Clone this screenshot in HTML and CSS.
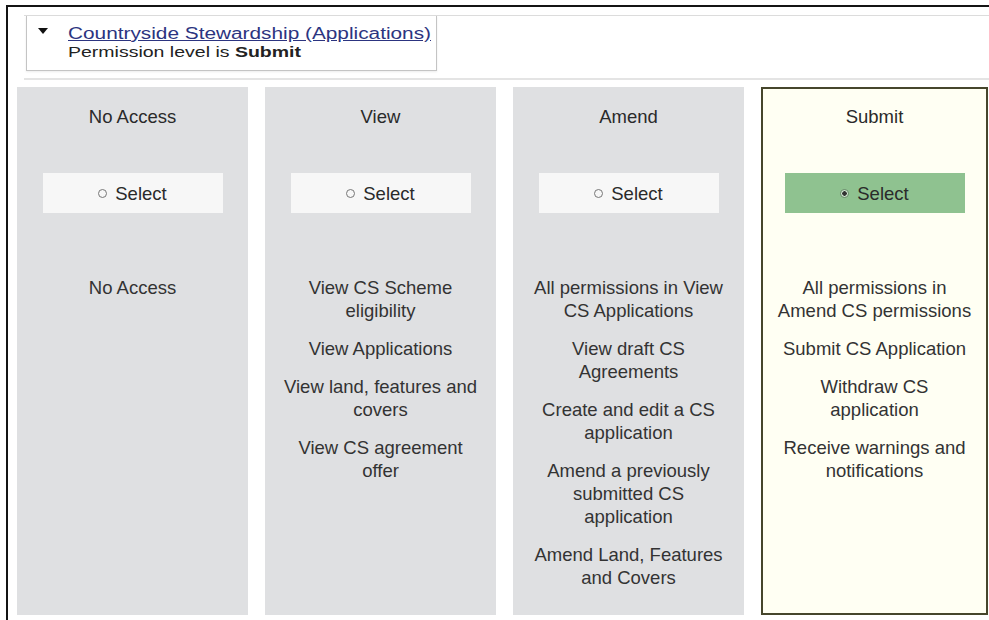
FILE: index.html
```html
<!DOCTYPE html>
<html lang="en">
<head>
<meta charset="utf-8">
<title>Countryside Stewardship (Applications)</title>
<link rel="stylesheet" href="styles.css">
</head>
<body>
<div class="frame">
  <div class="panel">
    <div class="summary">
      <span class="caret" aria-hidden="true"></span>
      <div class="summary-text">
        <a class="title" href="#">Countryside Stewardship (Applications)</a>
        <div class="level-note">Permission level is <b>Submit</b></div>
      </div>
    </div>
  </div>
  <div class="levels">
    <section class="level">
      <h3 class="level-name">No Access</h3>
      <button class="select" type="button"><span class="radio"></span>Select</button>
      <ul class="perms">
        <li>No Access</li>
      </ul>
    </section>
    <section class="level">
      <h3 class="level-name">View</h3>
      <button class="select" type="button"><span class="radio"></span>Select</button>
      <ul class="perms">
        <li>View CS Scheme eligibility</li>
        <li>View Applications</li>
        <li>View land, features and covers</li>
        <li>View CS agreement offer</li>
      </ul>
    </section>
    <section class="level">
      <h3 class="level-name">Amend</h3>
      <button class="select" type="button"><span class="radio"></span>Select</button>
      <ul class="perms">
        <li>All permissions in View CS Applications</li>
        <li>View draft CS Agreements</li>
        <li>Create and edit a CS application</li>
        <li>Amend a previously submitted CS application</li>
        <li>Amend Land, Features and Covers</li>
      </ul>
    </section>
    <section class="level is-current">
      <h3 class="level-name">Submit</h3>
      <button class="select is-on" type="button"><span class="radio"></span>Select</button>
      <ul class="perms">
        <li>All permissions in Amend CS permissions</li>
        <li>Submit CS Application</li>
        <li>Withdraw CS application</li>
        <li>Receive warnings and notifications</li>
      </ul>
    </section>
  </div>
</div>
</body>
</html>
```

FILE: styles.css
```css
html, body {
  margin: 0;
  padding: 0;
  background: #ffffff;
}

body {
  font-family: "Liberation Sans", Arial, sans-serif;
  color: #333333;
  overflow: hidden;
}

/* outer window frame: only top and left edges fall inside the view */
.frame {
  margin: 5px 0 0 6px;
  border-top: 2px solid #141414;
  border-left: 2px solid #141414;
  height: 640px;
  box-sizing: border-box;
}

/* header strip holding the collapsible summary */
.panel {
  margin: 8px 0 0 16px;
  height: 65px;
  box-sizing: border-box;
  border-top: 1px solid #dcdcdc;
  border-bottom: 2px solid #e4e4e4;
}

.summary {
  width: 411px;
  height: 55px;
  margin-left: 2px;
  box-sizing: border-box;
  border: 1px solid #c4c4c4;
  border-top: none;
  display: flex;
  align-items: flex-start;
  padding: 9px 0 0 11px;
  box-shadow: 0 1px 2px rgba(0,0,0,0.08);
}

.caret {
  width: 0;
  height: 0;
  margin-top: 3px;
  border-left: 5px solid transparent;
  border-right: 5px solid transparent;
  border-top: 6px solid #111;
}

/* wide-set header type */
.summary-text {
  margin-left: 20px;
  font-size: 15px;
  line-height: 18px;
  white-space: nowrap;
  transform: scaleX(1.3);
  transform-origin: left top;
}

.title {
  font-size: 16px;
  color: #2c3480;
  text-decoration: underline;
}

.level-note {
  color: #222;
}

/* the four permission level columns */
.levels {
  display: flex;
  gap: 17px;
  margin: 7px 0 0 9px;
}

.level {
  width: 231px;
  height: 528px;
  flex: none;
  box-sizing: border-box;
  background: #dfe0e2;
  padding-top: 18px;
  text-align: center;
  font-size: 18.5px;
  line-height: 23px;
}

.level.is-current {
  width: 227px;
  background: #fffff3;
  border: 2px solid #46462c;
  padding-top: 16px;
}

.level-name {
  margin: 0;
  font-size: 18.5px;
  font-weight: normal;
  line-height: 23px;
  color: #2a2a2a;
}

.select {
  display: flex;
  align-items: center;
  justify-content: center;
  width: 180px;
  height: 40px;
  margin: 45px auto 0;
  border: none;
  background: #f7f7f7;
  font: inherit;
  color: #2a2a2a;
  padding: 0;
}

.select.is-on {
  background: #8fc290;
}

.radio {
  width: 7px;
  height: 7px;
  border: 1px solid #777;
  border-radius: 50%;
  margin-right: 8px;
  box-sizing: content-box;
}

.select.is-on .radio {
  border-color: #6b8a6c;
  background: radial-gradient(circle, #333 0 2px, #cfe6cf 2.5px);
}

.perms {
  list-style: none;
  margin: 63px auto 0;
  padding: 0;
  width: 198px;
}

.perms li {
  margin: 0 0 15px;
}
```
